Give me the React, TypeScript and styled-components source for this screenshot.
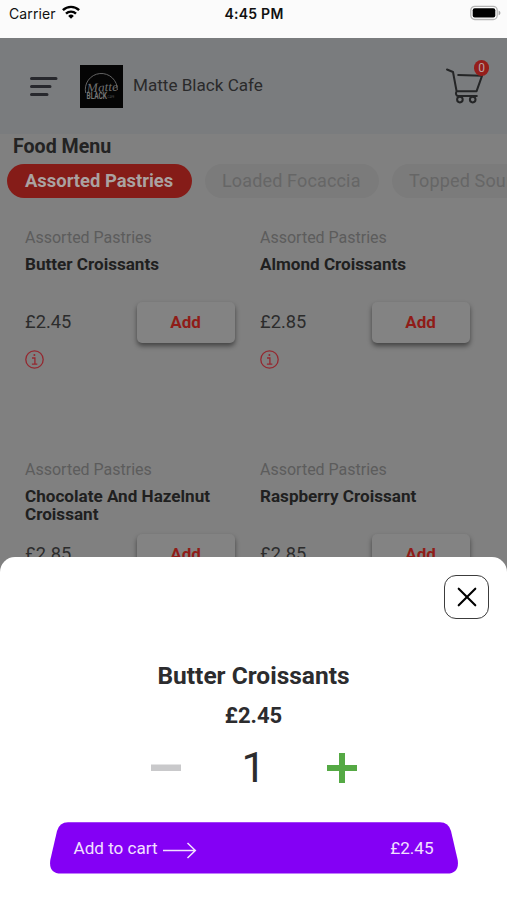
import React from "react";
import styled, { createGlobalStyle } from "styled-components";

const GlobalStyle = createGlobalStyle`
  *, *::before, *::after { box-sizing: border-box; }
  html, body { margin: 0; padding: 0; overflow: hidden; }
  body { font-family: Roboto, "Liberation Sans", sans-serif; background: #808080; }
  button { font: inherit; border: 0; padding: 0; background: none; }
  svg { display: block; flex: none; }
`;

const Screen = styled.div`
  width: 507px;
  height: 900px;
  overflow: hidden;
  position: relative;
  display: flex;
  flex-direction: column;
  background: #808080;
  color: #232323;
`;

const StatusBar = styled.div`
  height: 38px;
  flex: none;
  display: grid;
  grid-template-columns: 1fr auto 1fr;
  align-items: start;
  padding: 5px 6px 0 9px;
  background: #fbfbfb;
  color: #111;
  font-family: Inter, sans-serif;
  font-size: 14px;
  line-height: 18px;
`;

const Carrier = styled.div`
  display: flex;
  gap: 6px;
  letter-spacing: 0.1px;
`;

const Clock = styled.div`
  font-weight: 600;
  font-size: 14px;
  letter-spacing: 0.25px;
  margin-left: -2px;
`;

const BatterySlot = styled.div`
  display: flex;
  justify-content: flex-end;
`;

const Header = styled.header`
  height: 96px;
  flex: none;
  display: flex;
  align-items: center;
  padding: 0 17px 0 29px;
  background: #7a7c7e;
`;

const LogoFrame = styled.div`
  margin: 0 10px 0 22px;
`;

const CafeName = styled.div`
  flex: 1;
  padding-bottom: 2px;
  font-size: 17.1px;
  color: #2a2a2b;
  white-space: nowrap;
`;

const Cart = styled.div`
  position: relative;
  width: 46px;
  height: 52px;
`;

const CartBadge = styled.span`
  position: absolute;
  top: 0;
  right: 1px;
  width: 15px;
  height: 16px;
  border-radius: 8px;
  background: #951e1b;
  color: #b9a3a3;
  font-size: 12px;
  line-height: 16px;
  text-align: center;
`;

const Heading = styled.h1`
  margin: 0;
  padding: 0 13px;
  height: 30px;
  font-size: 19.6px;
  line-height: 25px;
  font-weight: 700;
`;

const Tabs = styled.div`
  display: flex;
  gap: 13px;
  padding-left: 7px;
  height: 34px;
  flex: none;
`;

const Tab = styled.button<{ $active?: boolean; $width: number }>`
  flex: 0 0 ${(p) => p.$width}px;
  height: 34px;
  border-radius: 17px;
  background: ${(p) => (p.$active ? "#851c18" : "#7b7b7b")};
  color: ${(p) => (p.$active ? "#aaa2a1" : "#666")};
  font-size: ${(p) => (p.$active ? 18.4 : 18)}px;
  font-weight: ${(p) => (p.$active ? 700 : 400)};
  text-align: left;
  padding: 0 0 2px ${(p) => (p.$active ? 18 : 17)}px;
  letter-spacing: ${(p) => (p.$active ? 0 : 0.15)}px;
  white-space: nowrap;
`;

const Menu = styled.main`
  display: grid;
  grid-template-columns: 210px 210px;
  grid-auto-rows: 232px;
  column-gap: 25px;
  padding: 29px 0 0 25px;
`;

const Item = styled.article`
  display: flex;
  flex-direction: column;
`;

const Category = styled.div`
  font-size: 16px;
  line-height: 22px;
  color: #5c5c5c;
`;

const ItemName = styled.h2`
  margin: 6px 0 0;
  height: 47px;
  width: 200px;
  font-size: 17.1px;
  line-height: 18px;
  font-weight: 700;
  color: #202020;
`;

const PriceRow = styled.div`
  display: flex;
  align-items: center;
  justify-content: space-between;
  height: 41px;
  font-size: 18.3px;
  color: #2c2c2c;
`;

const ItemPrice = styled.span`
  padding-bottom: 2px;
`;

const AddButton = styled.button`
  width: 98px;
  height: 41px;
  padding: 0 1px 2px 0;
  border-radius: 5px;
  background: #838383;
  box-shadow: 0 3px 5px rgba(0, 0, 0, 0.48);
  color: #8f1c18;
  font-size: 17px;
  font-weight: 700;
`;

const InfoButton = styled.button`
  width: 19px;
  height: 19px;
  margin-top: 7px;
`;

const Sheet = styled.section`
  position: absolute;
  left: 0;
  right: 0;
  bottom: 0;
  height: 343px;
  border-radius: 15px 15px 0 0;
  background: #fff;
  display: flex;
  flex-direction: column;
  align-items: center;
  padding-top: 18px;
`;

const CloseButton = styled.button`
  align-self: flex-end;
  width: 45px;
  height: 44px;
  margin-right: 18px;
  border: 1.3px solid #3c3c3c;
  border-radius: 12px;
  display: grid;
  place-items: center;
`;

const SheetTitle = styled.h2`
  margin: 43px 0 0;
  font-size: 24.5px;
  line-height: 28px;
  font-weight: 700;
  color: #2c2c2e;
`;

const SheetPrice = styled.div`
  margin-top: 13px;
  font-size: 22px;
  line-height: 26px;
  font-weight: 700;
  color: #2c2c2e;
`;

const Stepper = styled.div`
  display: grid;
  grid-template-columns: 30px 1fr 30px;
  align-items: center;
  width: 206px;
  height: 50px;
  margin-top: 14px;
`;

const Quantity = styled.output`
  text-align: center;
  font-size: 43px;
  line-height: 48px;
  padding-bottom: 2px;
  color: #2c2c2e;
`;

const CheckoutButton = styled.button`
  display: grid;
  width: 410px;
  height: 54px;
  margin-top: 28px;
  > * { grid-area: 1 / 1; }
`;

const CheckoutLabel = styled.span`
  display: flex;
  align-items: center;
  padding: 0 25px;
  color: #f2e0ff;
  font-size: 17.1px;
  z-index: 1;
`;

const ArrowSlot = styled.span`
  flex: 1;
  padding: 5px 0 0 5px;
`;

const Wifi = () => (
  <svg width="18" height="14" viewBox="0 0 18 14" fill="none" stroke="#000" strokeWidth="2.4">
    <path d="M.9 5.2a11.5 11.5 0 0 1 16.2 0" />
    <path d="M4 8.6a7.2 7.2 0 0 1 10 0" />
    <path d="M9 13.8 6.2 10.9a4 4 0 0 1 5.6 0Z" fill="#000" stroke="none" />
  </svg>
);

const Battery = () => (
  <svg width="31" height="16" viewBox="0 0 31 16">
    <rect x=".8" y="1.3" width="26.4" height="13.2" rx="4" fill="#fff" stroke="#b5b5b5" strokeWidth="1.3" />
    <rect x="2.7" y="3.2" width="22.6" height="9.4" rx="2" fill="#000" />
    <path d="M28.6 5.5c2.4.8 2.4 4 0 4.8Z" fill="#a5a5a5" />
  </svg>
);

const MenuIcon = () => (
  <svg width="29" height="21" viewBox="0 0 29 21" fill="none" stroke="#27282d" strokeWidth="3" strokeLinecap="round">
    <path d="M2.5 2.5h24.5M2.5 10.5h18.5M2.5 18.5h15.5" />
  </svg>
);

const Logo = () => (
  <svg width="43" height="43" viewBox="0 0 43 43">
    <rect width="43" height="43" fill="#050505" />
    <path d="M5.7 28A16 16 0 1 1 37.3 25" fill="none" stroke="#6d6d6d" strokeWidth=".9" />
    <text x="7" y="26.5" transform="rotate(-3 21 25)" textLength="31" lengthAdjust="spacingAndGlyphs" fontFamily="cursive" fontStyle="italic" fontSize="12.5" fill="#707070">Matte</text>
    <text x="6.5" y="34.3" textLength="20.5" lengthAdjust="spacingAndGlyphs" fontFamily="Roboto, sans-serif" fontSize="8.3" fontWeight="700" fill="#777">BLACK</text>
    <text x="27.5" y="33" textLength="7" lengthAdjust="spacingAndGlyphs" fontFamily="Roboto, sans-serif" fontSize="4" fill="#505050">CAFE</text>
  </svg>
);

const CartIcon = () => (
  <svg width="46" height="52" viewBox="0 0 46 52" fill="none" stroke="#242526" strokeWidth="2" strokeLinecap="round" strokeLinejoin="round">
    <path d="M3 9.5 9 12l3.6 19.2h20L38 15.8 14.2 15M12.6 31.2c-1.3 2.4-.5 4.8 1.6 4.8h18.6" />
    <circle cx="15.9" cy="39.6" r="2.8" />
    <circle cx="28.7" cy="39.6" r="2.8" />
  </svg>
);

const InfoIcon = () => (
  <svg width="19" height="19" viewBox="0 0 19 19" fill="none" stroke="#94272f" strokeWidth="1.3">
    <circle cx="9.5" cy="9.5" r="8.7" />
    <path d="M7 8h2.9v6M6.9 14.2h5.4" />
    <circle cx="9.4" cy="5" r="1" fill="#94272f" stroke="none" />
  </svg>
);

const CloseIcon = () => (
  <svg width="20" height="20" viewBox="0 0 20 20" stroke="#000" strokeWidth="2.1" strokeLinecap="round">
    <path d="m1.7 1.7 16.6 16.6M18.3 1.7 1.7 18.3" />
  </svg>
);

const MinusIcon = () => (
  <svg width="30" height="30" viewBox="0 0 30 30">
    <path d="M0 11.5h30v6.5H0Z" fill="#c9c9cb" />
  </svg>
);

const PlusIcon = () => (
  <svg width="30" height="30" viewBox="0 0 30 30">
    <path d="M12 0h6v12h12v6H18v12h-6V18H0v-6h12Z" fill="#55a944" />
  </svg>
);

const ButtonShape = () => (
  <svg width="410" height="54" viewBox="0 0 410 54">
    <path
      d="M19 1.3H391Q399.5 1.3 402 10L408.7 39Q410.5 52.5 398 52.5H12Q-.5 52.5 1.3 39L8 10Q10.5 1.3 19 1.3Z"
      fill="#8400f5"
    />
  </svg>
);

const Arrow = () => (
  <svg width="34" height="17" viewBox="0 0 34 17" fill="none" stroke="#f2e0ff" strokeWidth="1.5">
    <path d="M0 8.5h32M24.5 1l7.8 7.5-7.8 7.5" />
  </svg>
);

const items = [
  { name: "Butter Croissants", price: "£2.45" },
  { name: "Almond Croissants", price: "£2.85" },
  { name: "Chocolate And Hazelnut Croissant", price: "£2.85" },
  { name: "Raspberry Croissant", price: "£2.85" },
];

export default function App() {
  return (
    <Screen>
      <GlobalStyle />
      <StatusBar>
        <Carrier>
          <span>Carrier</span>
          <Wifi />
        </Carrier>
        <Clock>4:45 PM</Clock>
        <BatterySlot>
          <Battery />
        </BatterySlot>
      </StatusBar>
      <Header>
        <MenuIcon />
        <LogoFrame>
          <Logo />
        </LogoFrame>
        <CafeName>Matte Black Cafe</CafeName>
        <Cart>
          <CartIcon />
          <CartBadge>0</CartBadge>
        </Cart>
      </Header>
      <Heading>Food Menu</Heading>
      <Tabs>
        <Tab $active $width={185}>Assorted Pastries</Tab>
        <Tab $width={174}>Loaded Focaccia</Tab>
        <Tab $width={200}>Topped Sourdough</Tab>
      </Tabs>
      <Menu>
        {items.map((item) => (
          <Item key={item.name}>
            <Category>Assorted Pastries</Category>
            <ItemName>{item.name}</ItemName>
            <PriceRow>
              <ItemPrice>{item.price}</ItemPrice>
              <AddButton>Add</AddButton>
            </PriceRow>
            <InfoButton aria-label="Item information">
              <InfoIcon />
            </InfoButton>
          </Item>
        ))}
      </Menu>
      <Sheet>
        <CloseButton aria-label="Close">
          <CloseIcon />
        </CloseButton>
        <SheetTitle>Butter Croissants</SheetTitle>
        <SheetPrice>£2.45</SheetPrice>
        <Stepper>
          <MinusIcon />
          <Quantity>1</Quantity>
          <PlusIcon />
        </Stepper>
        <CheckoutButton>
          <ButtonShape />
          <CheckoutLabel>
            <span>Add to cart</span>
            <ArrowSlot>
              <Arrow />
            </ArrowSlot>
            <span>£2.45</span>
          </CheckoutLabel>
        </CheckoutButton>
      </Sheet>
    </Screen>
  );
}
